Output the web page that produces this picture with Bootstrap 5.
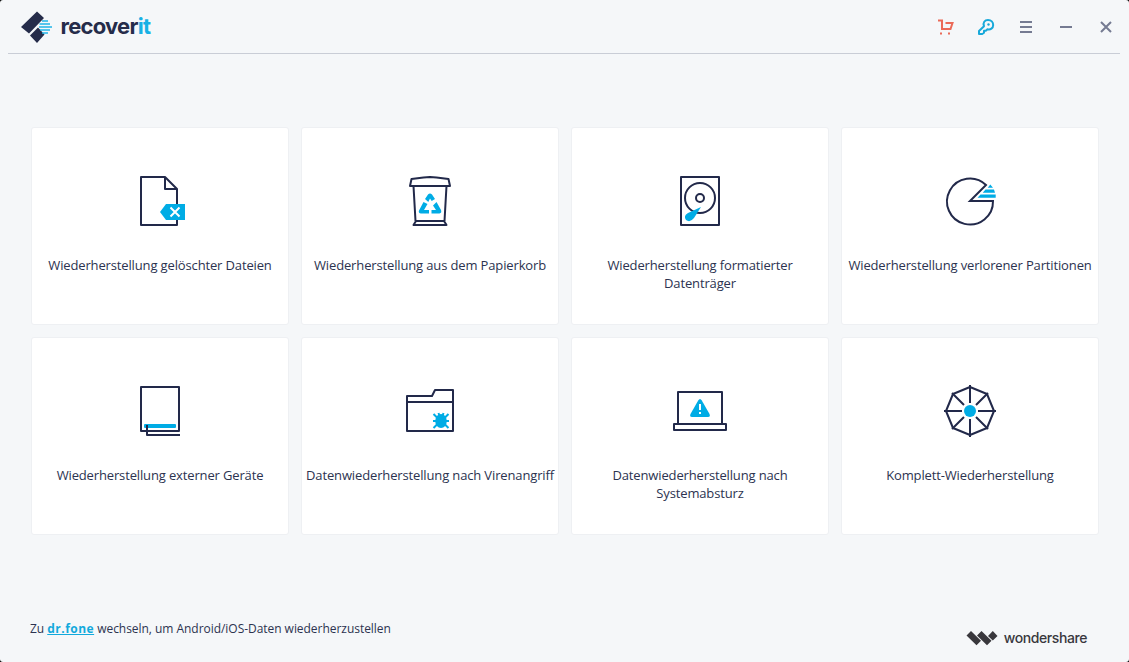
<!DOCTYPE html>
<html lang="de">
<head>
<meta charset="utf-8">
<meta name="viewport" content="width=device-width, initial-scale=1">
<title>Recoverit</title>
<link href="https://cdn.jsdelivr.net/npm/bootstrap@5.3.0/dist/css/bootstrap.min.css" rel="stylesheet">
<style>
  :root { --ink: #22294a; --cyan: #00ace5; }
  body { background: #000; font-family: "Open Sans", sans-serif; color: #2c3350; }
  .app-window { height: 662px; background: #f5f7f9; border-radius: 3px; padding: 0 9px 0 8px; }
  .titlebar { height: 54px; border-bottom: 1px solid #c9cdd6; }
  .brand-mark { width: 32px; height: 32px; margin-left: 12.500px; }
  .brand-name { font: 700 22px/28px Inter, sans-serif; letter-spacing: -.75px; margin: -2px 0 0 8px; color: #252c4a; }
  .brand-name span { color: #18b1e5; }
  .tool { width: 40px; height: 40px; background: none; border: 0; }
  .tool svg { display: block; }
  .tools { margin-right: -6px; }
  .tiles { display: grid; grid-template-columns: repeat(4, 258px); grid-auto-rows: 198px; gap: 12px; margin: 73px 0 0 23px; }
  .tile { border: 1px solid #eef0f3; border-radius: 3px; background: #fff; padding-top: 32px; font-size: 13px; line-height: 18px; letter-spacing: -.14px; color: #2c3350; }
  .tile svg { width: 80px; height: 80px; margin-bottom: 16px; fill: none; stroke: var(--ink); stroke-width: 2; stroke-linejoin: round; }
  .tile .accent { fill: var(--cyan); stroke: none; }
  .tile .cut { stroke: #fff; }
  .tile .legs { stroke: var(--cyan); }
  .hint { font-size: 12px; line-height: 18px; letter-spacing: -.04px; margin: 0 0 24px 22px; }
  .hint a { color: #12a9dc; font-weight: 700; letter-spacing: .48px; }
  .maker { margin: 0 33px 10px 0; }
  .maker-name { font: 500 14px/28px Inter, sans-serif; letter-spacing: -.42px; color: #39383d; margin-left: 6px; }
</style>
</head>
<body>
<div class="app-window d-flex flex-column">
  <header class="titlebar d-flex align-items-center justify-content-between flex-shrink-0">
    <div class="d-flex align-items-center">
      <svg class="brand-mark" viewBox="0 0 32 32">
        <path fill="#252c4a" d="M0 16 16 .5l7 6.500L8 22.600zM9 24.500 17 16.500l6.500 7L16 32z"/>
        <path stroke="#22b5e7" stroke-width="1.700" d="M21 10h6M18.500 13h10.500M18 16h13M19 19h10M21 22h6"/>
      </svg>
      <div class="brand-name">recover<span>it</span></div>
    </div>
    <div class="tools d-flex">
      <button class="tool p-0 d-flex align-items-center justify-content-center" aria-label="Warenkorb">
        <svg width="18" height="18" viewBox="0 0 18 18" fill="none" stroke="#eb6a58" stroke-width="2"><path d="M1 2.500H5v8.500h8.500l2-6H8.500"/><path d="M3 15.500h2M11 15.500h2"/></svg>
      </button>
      <button class="tool p-0 d-flex align-items-center justify-content-center" aria-label="Registrieren">
        <svg width="18" height="18" viewBox="0 0 18 18" fill="none" stroke="#18a9da" stroke-width="2" stroke-linejoin="round"><path d="M7 8.200C5.600 4.500 7.700 2 11 2c3.200 0 5.200 2.200 5.200 4.900 0 3.200-2.900 5.300-5.700 4.300L8.800 12.700H7v2L5.200 16H2v-3z"/><circle cx="11.500" cy="6.500" r="1.200" fill="#18a5d5" stroke="none"/></svg>
      </button>
      <button class="tool p-0 d-flex align-items-center justify-content-center" aria-label="Menü">
        <svg width="18" height="18" viewBox="0 0 18 18" stroke="#757b92" stroke-width="2"><path d="M3 4h12M3 9h12M3 14h12"/></svg>
      </button>
      <button class="tool p-0 d-flex align-items-center justify-content-center" aria-label="Minimieren">
        <svg width="18" height="18" viewBox="0 0 18 18" stroke="#757b92" stroke-width="2"><path d="M3 9h12"/></svg>
      </button>
      <button class="tool p-0 d-flex align-items-center justify-content-center" aria-label="Schließen">
        <svg width="18" height="18" viewBox="0 0 18 18" stroke="#757b92" stroke-width="2"><path d="M4 4l10 10M14 4 4 14"/></svg>
      </button>
    </div>
  </header>

  <main class="tiles">
    <div class="tile d-flex flex-column align-items-center text-center text-nowrap">
      <svg viewBox="0 0 80 80"><path d="M45 17H21v48h36V29zM45 17v12h12"/><path class="accent" d="M40 52l6-8h19v16H46z"/><path class="cut" d="M50.500 47.500l9 9M59.500 47.500l-9 9"/></svg>
      <div>Wiederherstellung gelöschter Dateien</div>
    </div>
    <div class="tile d-flex flex-column align-items-center text-center text-nowrap">
      <svg viewBox="0 0 80 80"><path d="M20 26l1.500-7 12-1.500L40 17l6.500.5 12 1.500 1.500 7zM23.500 26l2 35M56.500 26l-2 35M26 61h28l2.500 4h-33z"/><path class="accent" d="M35 39l3-4.500q2-2 4 0l3 4.500-3.300 2L40 38.500 38.300 42zM33.500 42l4 2-3.500 6h5v3.500h-8q-3-.5-2-3zM46.500 42l4.500 8q1 3-1.500 3.500h-8V50H46l-3-4.500z"/></svg>
      <div>Wiederherstellung aus dem Papierkorb</div>
    </div>
    <div class="tile d-flex flex-column align-items-center text-center text-nowrap">
      <svg viewBox="0 0 80 80"><path d="M21 17h38v48H21z"/><circle cx="40" cy="38" r="15"/><circle cx="40" cy="38" r="4"/><path class="accent" d="M41 47L34 58q-4 5-8 2-3-4 2-7z"/></svg>
      <div>Wiederherstellung formatierter<br>Datenträger</div>
    </div>
    <div class="tile d-flex flex-column align-items-center text-center text-nowrap">
      <svg viewBox="0 0 80 80"><path d="M56 25A23 23 0 1 0 63 41H40z" stroke-linejoin="miter"/><path class="accent" d="M60.300 24.500l2.700 3.200h-5.300zM55.500 29.500h8.500l1 3.200H52.700zM50.500 34.500h15.200v3.300H47.500z"/></svg>
      <div>Wiederherstellung verlorener Partitionen</div>
    </div>
    <div class="tile d-flex flex-column align-items-center text-center text-nowrap">
      <svg viewBox="0 0 80 80"><path d="M21 17h38v44H21z"/><rect class="accent" x="24" y="54" width="32" height="4" rx="1"/><path d="M27 55v10h33"/></svg>
      <div>Wiederherstellung externer Geräte</div>
    </div>
    <div class="tile d-flex flex-column align-items-center text-center text-nowrap">
      <svg viewBox="0 0 80 80"><path d="M17 26h25l3-6h18v41H17zM17 32h46"/><ellipse class="accent" cx="51" cy="51" rx="5.800" ry="7"/><path class="legs" d="M48.500 43l1 3M53.500 43l-1 3M43.500 44l4 4M58.500 44l-4 4M43 51h16M43.500 58l4-4M58.500 58l-4-4"/></svg>
      <div>Datenwiederherstellung nach Virenangriff</div>
    </div>
    <div class="tile d-flex flex-column align-items-center text-center text-nowrap">
      <svg viewBox="0 0 80 80"><path d="M18 54V22h44v32M14 54h52v6H14z"/><path class="accent" d="M38.200 30.500q1.800-3 3.600 0L49.500 44q1.200 3-1.500 3H32q-2.700 0-1.500-3z"/><path class="cut" d="M40 34v6M40 42v2"/></svg>
      <div>Datenwiederherstellung nach<br>Systemabsturz</div>
    </div>
    <div class="tile d-flex flex-column align-items-center text-center text-nowrap">
      <svg viewBox="0 0 80 80"><path d="M40 17l17 7 7 17-7 17-17 7-17-7-7-17 7-17z"/><path d="M40 15v18M40 49v18M14 41h18M48 41h18M22 23l12 12M58 23L46 35M22 59l12-12M58 59L46 47"/><circle class="accent" cx="40" cy="41" r="6"/></svg>
      <div>Komplett-Wiederherstellung</div>
    </div>
  </main>

  <footer class="d-flex justify-content-between align-items-end mt-auto">
    <p class="hint">Zu <a href="#">dr.fone</a> wechseln, um Android/iOS-Daten wiederherzustellen</p>
    <div class="maker d-flex align-items-center">
      <svg width="32" height="16" viewBox="0 0 32 16" fill="#39383d"><path d="M.5 5.500 5 1l10 9.800L10.500 15.300zM11 5.500 15.500 1l10 9.800-4.500 4.500zM22 6l4.800-5 4.700 5-4.700 4.500z"/></svg>
      <div class="maker-name">wondershare</div>
    </div>
  </footer>
</div>
<script src="https://cdn.jsdelivr.net/npm/bootstrap@5.3.0/dist/js/bootstrap.bundle.min.js"></script>
</body>
</html>
